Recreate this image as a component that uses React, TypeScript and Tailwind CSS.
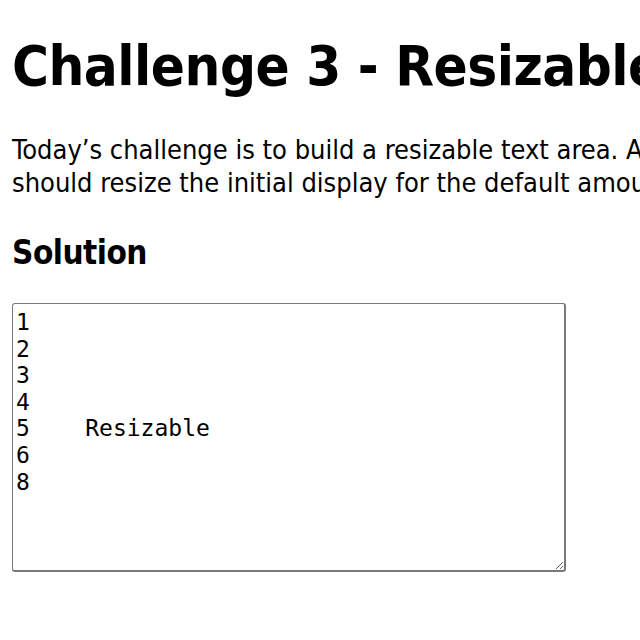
import { useState } from 'react';

const sans = "font-['DejaVu_Sans_Condensed','DejaVu_Sans',sans-serif]";

export default function App() {
  const [text, setText] = useState('1\n2\n3\n4\n5    Resizable\n6\n8');

  return (
    <div className="w-[640px] h-[640px] overflow-hidden bg-white text-black">
      <div className={`w-[1200px] px-[12px] ${sans}`}>
        <h1 className="mt-[30px] text-[56px] leading-[72px] font-bold tracking-[-0.5px]">
          Challenge 3 - Resizable Text Area
        </h1>
        <p className="mt-[31px] text-[27px] leading-[33px]">
          Today’s challenge is to build a resizable text area. As the user types, the text area
          <br />
          should resize the initial display for the default amount of rows it holds.
        </p>
        <h2 className="mt-[34px] text-[33px] leading-[40px] font-bold tracking-[-0.5px]">Solution</h2>
        <textarea
          value={text}
          onChange={(e) => setText(e.target.value)}
          className="mt-[30px] block w-[554px] h-[269px] rounded-[3px] border-t border-l border-r-2 border-b-2 border-[#7a7a7a] px-[3px] pt-[5px] pb-[4px] font-['DejaVu_Sans_Mono',monospace] text-[23px] leading-[26.6px] outline-none"
        />
      </div>
    </div>
  );
}
